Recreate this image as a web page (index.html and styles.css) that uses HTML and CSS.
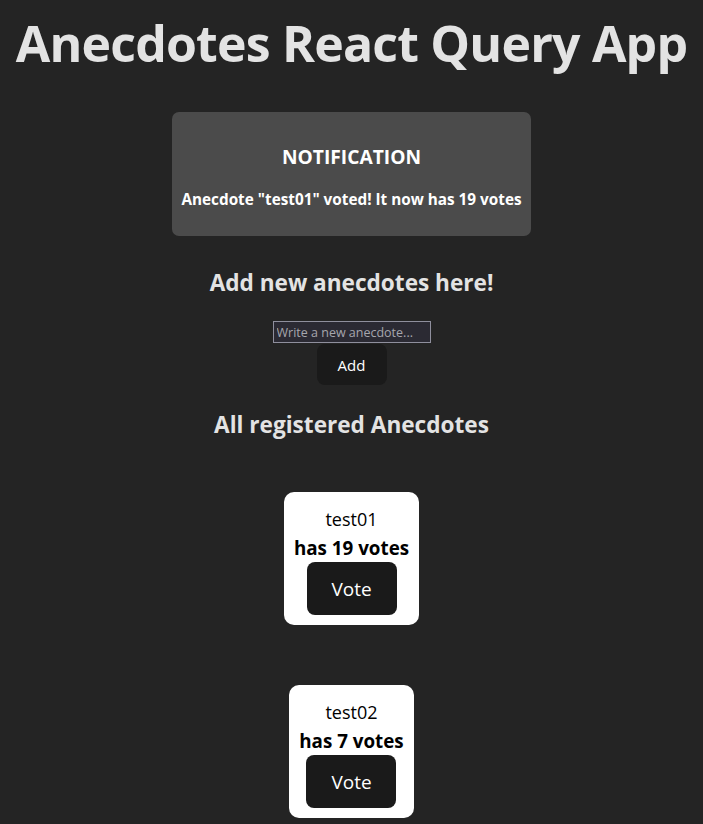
FILE: index.html
```html
<!DOCTYPE html>
<html lang="en">
<head>
<meta charset="utf-8">
<title>Anecdotes React Query App</title>
<link rel="stylesheet" href="styles.css">
</head>
<body>
<div class="app">
  <h1 class="title">Anecdotes React Query App</h1>
  <div class="notification">
    <h3 class="notification-title">NOTIFICATION</h3>
    <p class="notification-text">Anecdote "test01" voted! It now has 19 votes</p>
  </div>
  <h3 class="section-title">Add new anecdotes here!</h3>
  <form class="new-form">
    <input class="new-input" type="text" placeholder="Write a new anecdote...">
    <button class="btn btn-add" type="button">Add</button>
  </form>
  <h3 class="section-title section-list">All registered Anecdotes</h3>
  <div class="list">
    <div class="card">
      <div class="card-content">test01</div>
      <div class="card-votes">has 19 votes</div>
      <button class="btn btn-vote" type="button">Vote</button>
    </div>
    <div class="card">
      <div class="card-content">test02</div>
      <div class="card-votes">has 7 votes</div>
      <button class="btn btn-vote" type="button">Vote</button>
    </div>
  </div>
</div>
</body>
</html>
```

FILE: styles.css
```css
html, body {
  margin: 0;
  padding: 0;
  background: #242424;
}
body {
  font-family: "Open Sans", "Noto Sans", sans-serif;
  color: rgba(255, 255, 255, 0.87);
}
.app {
  display: flex;
  flex-direction: column;
  align-items: center;
  text-align: center;
  padding-top: 15px;
}
.title {
  margin: 0;
  font-size: 50px;
  line-height: 56px;
  letter-spacing: -0.8px;
  white-space: nowrap;
  font-weight: 700;
  color: #e3e3e3;
}
.notification {
  margin-top: 41px;
  background: #4b4b4b;
  border-radius: 7px;
  padding: 33px 9px 27px;
  color: #fff;
}
.notification-title {
  margin: 0;
  font-size: 19.2px;
  line-height: 24px;
  font-weight: 700;
}
.notification-text {
  margin: 20px 0 0;
  font-size: 15.3px;
  line-height: 20px;
  font-weight: 700;
}
.section-title {
  margin: 33px 0 0;
  font-size: 22.6px;
  line-height: 28px;
  font-weight: 700;
  color: #e3e3e3;
}
.new-form {
  margin-top: 24px;
  display: flex;
  flex-direction: column;
  align-items: center;
}
.new-input {
  box-sizing: border-box;
  width: 158px;
  height: 22px;
  margin: 0;
  padding: 1px 3px;
  background: #2b2a33;
  border: 1px solid #8f8f9d;
  border-radius: 0;
  color: #fff;
  font-family: inherit;
  font-size: 12.5px;
}
.new-input::placeholder {
  color: #a6a6ad;
}
.btn {
  border: 0;
  border-radius: 8px;
  background: #1a1a1a;
  color: #fff;
  font-family: inherit;
  cursor: pointer;
}
.btn-add {
  margin-top: 1px;
  width: 70px;
  height: 41px;
  font-size: 15px;
  font-weight: 500;
}
.section-list {
  margin-top: 26px;
}
.list {
  margin-top: 53px;
  display: flex;
  flex-direction: column;
  align-items: center;
  gap: 60px;
}
.card {
  background: #fff;
  border-radius: 10px;
  padding: 14px 10px 10px;
  color: #000;
  display: flex;
  flex-direction: column;
  align-items: center;
}
.card-content {
  font-size: 18px;
  line-height: 26px;
}
.card-votes {
  margin-top: 5px;
  font-size: 18.8px;
  line-height: 22px;
  font-weight: 700;
}
.btn-vote {
  margin-top: 3px;
  width: 90px;
  height: 53px;
  font-size: 19px;
}
```
